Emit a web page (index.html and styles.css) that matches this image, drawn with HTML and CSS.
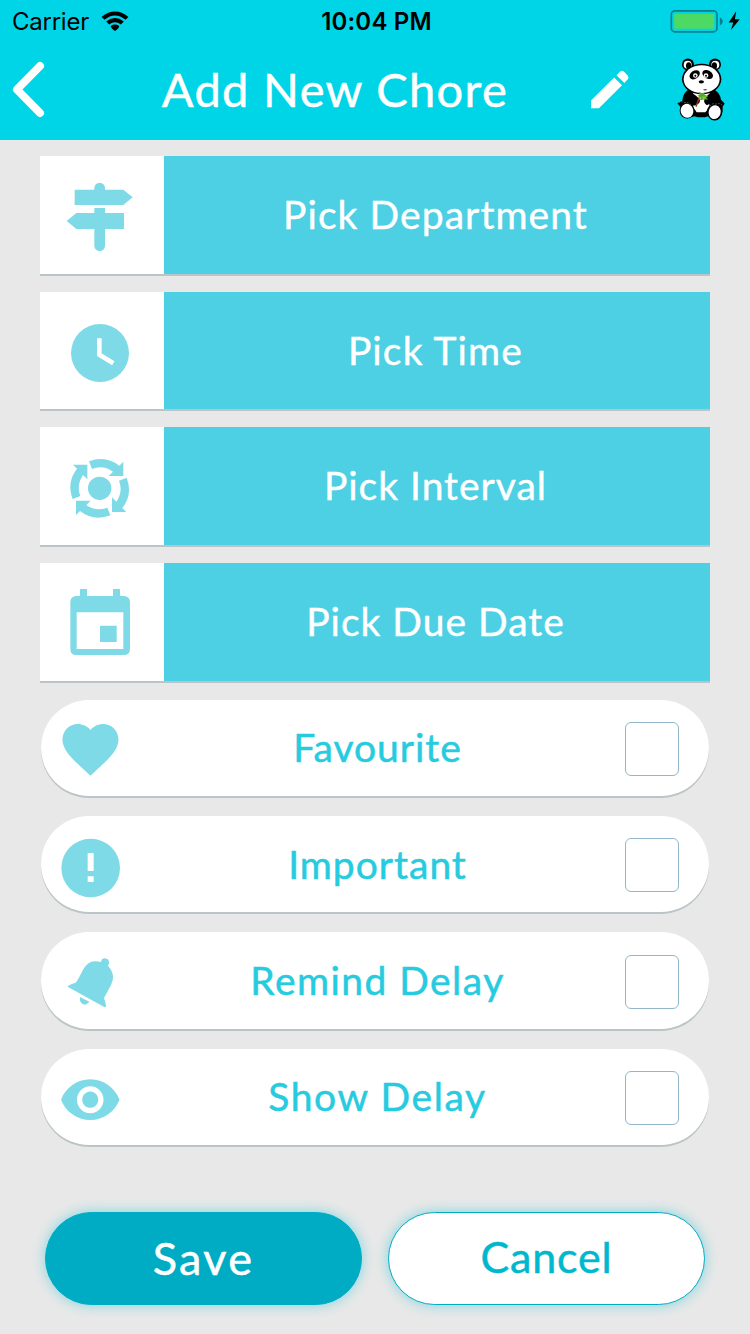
FILE: index.html
```html
<!DOCTYPE html>
<html lang="en">
<head>
<meta charset="utf-8">
<title>Add New Chore</title>
<link rel="stylesheet" href="styles.css">
</head>
<body>
<div class="screen">
  <header class="header">
    <div class="status">
      <div class="status-left">
        <span class="carrier">Carrier</span>
        <svg class="wifi" viewBox="303 29 84 61"><path d="M304 47Q345 14 386 47L377 56Q345 30 313 56ZM318 61Q345 40 372 61L363 70Q345 56 327 70ZM332 75Q345 66 358 75Q357 82 345 90Q333 82 332 75Z"/></svg>
      </div>
      <span class="clock">10:04 PM</span>
      <svg class="battery" viewBox="330 27 213 70">
        <rect x="332.500" y="29.500" width="139" height="64" rx="11" fill="none" stroke="#087f8c" stroke-width="5"/>
        <rect x="341" y="39" width="122" height="45" rx="4" fill="#4cd964"/>
        <path d="M480 49Q489 54 489 61.500Q489 69 480 74Z" fill="#087f8c"/>
        <path d="M530 31L507 65H521L514 88L541 55H526Z"/>
      </svg>
    </div>
    <div class="nav">
      <svg class="back" viewBox="36 183 100 172"><path d="M121 198L51 269L121 340" fill="none" stroke="#fff" stroke-width="24" stroke-linecap="round" stroke-linejoin="round"/></svg>
      <h1 class="title">Add New Chore</h1>
      <svg class="edit" viewBox="93 212 115 116"><path d="M93 327V303L163 234L187 257L117 327ZM170 227L182 215Q187 211 192 215L205 229Q208 234 205 238L194 250Z" fill="#fff"/></svg>
      <svg class="panda" viewBox="349 176 144 188">
        <circle cx="382" cy="195" r="18"/><circle cx="463" cy="195" r="18"/>
        <circle cx="381" cy="196" r="12" fill="#fff"/><circle cx="464" cy="196" r="12" fill="#fff"/>
        <ellipse cx="384" cy="199" rx="8" ry="11"/><ellipse cx="461" cy="199" rx="8" ry="11"/>
        <path d="M380 272Q366 285 365 304L350 311L359 322Q353 352 380 357L401 350Q422 357 443 350L463 362Q489 353 486 322L492 312L481 301Q479 282 461 270Z"/>
        <path d="M396 276Q422 286 448 276Q446 290 442 303L448 322L434 338H408L397 322L403 308Z" fill="#fff"/>
        <path d="M380 278Q397 278 415 297Q421 305 414 312L402 319L389 306ZM459 278Q443 281 432 297Q427 311 439 317L457 307Z"/>
        <ellipse cx="423" cy="239" rx="59" ry="46"/>
        <ellipse cx="423" cy="239" rx="54" ry="42" fill="#fff"/>
        <ellipse cx="402" cy="226" rx="17" ry="12" transform="rotate(-35 402 226)"/>
        <ellipse cx="441" cy="225" rx="17" ry="12" transform="rotate(28 441 225)"/>
        <circle cx="404" cy="228" r="7" fill="#fff"/><circle cx="436" cy="228" r="7" fill="#fff"/>
        <circle cx="404" cy="229" r="3"/><circle cx="436" cy="229" r="3"/>
        <ellipse cx="422" cy="247" rx="8" ry="5"/>
        <path d="M427 271Q433 267 440 271Q433 274 427 271Z"/>
        <path d="M416 293L406 322" stroke="#963d18" stroke-width="4"/>
        <path d="M410 289L417 286L414 277L425 281L432 278L431 286L443 290L436 293L443 300L429 300L418 302L420 295Z" fill="#55a92b"/>
        <path d="M422 292L440 291L429 299Z" fill="#8cc93d"/>
        <ellipse cx="379" cy="333" rx="22" ry="24"/><ellipse cx="462" cy="337" rx="23" ry="26"/>
        <ellipse cx="379" cy="334" rx="19" ry="21" fill="#fff" transform="rotate(-15 379 334)"/>
        <ellipse cx="462" cy="338" rx="18" ry="21" fill="#fff" transform="rotate(15 462 338)"/>
        <path d="M354 311Q361 302 370 310Q386 305 391 318M448 320Q455 309 466 314Q479 308 489 322" fill="none" stroke="#aaa" stroke-width="1.500" stroke-dasharray="5 4"/>
      </svg>
    </div>
  </header>

  <main class="form">
    <section class="pickers">
      <div class="picker">
        <svg class="picker-icon" viewBox="30 33 372 353"><path d="M193 134V129A16 16 0 0 1 225 129V134H280L308 157L280 180H134V134ZM193 204V189H225V204H282V252H225V302A16 16 0 0 1 193 302V252H139L110 228L139 204Z"/></svg>
        <span class="picker-label department">Pick Department</span>
      </div>
      <div class="picker">
        <svg class="picker-icon" viewBox="30 21 372 353"><circle cx="210" cy="204" r="87"/><path d="M208 160V209L250 235" fill="none" stroke="#fff" stroke-width="14"/></svg>
        <span class="picker-label time">Pick Time</span>
      </div>
      <div class="picker">
        <svg class="picker-icon" viewBox="30 21 372 353">
          <defs><path id="turn" d="M177 124Q227 105 268 137L280 125V168H236L249 155Q219 134 186 147Z"/></defs>
          <circle cx="209" cy="205" r="35"/>
          <use href="#turn"/><use href="#turn" transform="rotate(90 209 205)"/><use href="#turn" transform="rotate(180 209 205)"/><use href="#turn" transform="rotate(270 209 205)"/>
        </svg>
        <span class="picker-label interval">Pick Interval</span>
      </div>
      <div class="picker">
        <svg class="picker-icon" viewBox="30 24 372 353"><path fill-rule="evenodd" d="M150 123V102H171V123H249V102H270V123H281Q300 124 300 142V281Q300 300 281 300H139Q121 300 121 281V142Q121 124 139 123ZM140 172V282H280V172ZM210 212H260V261H210Z"/></svg>
        <span class="picker-label date">Pick Due Date</span>
      </div>
    </section>

    <section class="options">
      <label class="option">
        <svg class="option-icon" viewBox="33 29 300 291"><path transform="translate(80.600 78.700) scale(8.400 8.440)" d="M12 21.350l-1.450-1.320C5.400 15.360 2 12.280 2 8.500 2 5.420 4.420 3 7.500 3c1.740 0 3.410.81 4.500 2.090C13.090 3.810 14.760 3 16.500 3 19.580 3 22 5.420 22 8.500c0 3.780-3.400 6.860-8.550 11.540L12 21.350z"/></svg>
        <span class="option-label favourite">Favourite</span>
        <input class="check" type="checkbox">
      </label>
      <label class="option">
        <svg class="option-icon" viewBox="33 378 300 291"><path fill-rule="evenodd" d="M94 534A88 88 0 0 1 270 534A88 88 0 0 1 94 534ZM173 489V543H191V489ZM173 559V576H191V559Z"/></svg>
        <span class="option-label important">Important</span>
        <input class="check" type="checkbox">
      </label>
      <label class="option">
        <svg class="option-icon" viewBox="33 38 300 291"><path d="M114 203V200Q116 197 137 190Q142 186 152 165Q164 138 178 130Q192 123 213 128Q214 117 225 117Q237 118 237 130Q237 135 234 139Q259 165 243 197L222 236Q228 252 228 262L224 264ZM150 233L178 247Q171 256 163 256Q147 251 150 233Z"/></svg>
        <span class="option-label remind">Remind Delay</span>
        <input class="check" type="checkbox">
      </label>
      <label class="option">
        <svg class="option-icon" viewBox="33 387 300 291"><path transform="translate(85 441.500) scale(7.980 8.130)" d="M12 4.500C7 4.500 2.730 7.610 1 12c1.730 4.390 6 7.500 11 7.500s9.270-3.110 11-7.500c-1.730-4.390-6-7.500-11-7.500zM12 17c-2.760 0-5-2.240-5-5s2.240-5 5-5 5 2.240 5 5-2.240 5-5 5zm0-8c-1.660 0-3 1.340-3 3s1.340 3 3 3 3-1.340 3-3-1.340-3-3-3z"/></svg>
        <span class="option-label show">Show Delay</span>
        <input class="check" type="checkbox">
      </label>
    </section>

    <div class="actions">
      <button class="button save">Save</button>
      <button class="button cancel">Cancel</button>
    </div>
  </main>
</div>
</body>
</html>
```
FILE: styles.css
```css
* { box-sizing: border-box; }

body {
  margin: 0;
  background: #e8e8e8;
  font-family: Lato, "Open Sans", sans-serif;
}

svg { display: block; }

.screen {
  width: 750px;
  height: 1334px;
  overflow: hidden;
}

/* Header */
.header {
  height: 140px;
  background: #00d5e7;
}

.status {
  display: grid;
  grid-template-columns: 1fr auto 1fr;
  align-items: center;
  height: 40px;
  padding: 0 9px 0 12px;
  font: 500 24px/40px Inter, sans-serif;
  color: #000;
}

.status-left {
  display: flex;
  align-items: center;
  gap: 12px;
}

.carrier {
  padding-top: 2px;
  font-weight: 400;
  letter-spacing: -0.250px;
}

.wifi { width: 28px; height: 20px; }

.clock {
  padding-top: 2px;
  font-weight: 600;
  letter-spacing: 0.200px;
}

.battery { width: 71px; height: 23px; justify-self: end; }

.nav {
  display: grid;
  grid-template-columns: 34px 1fr 38px 96px;
  align-items: center;
  height: 100px;
  padding: 0 25px 2px 12px;
}

.back { width: 33px; height: 57px; }

.title {
  margin: 0;
  padding-left: 33px;
  text-align: center;
  font-size: 47px;
  font-weight: 400;
  line-height: 60px;
  letter-spacing: 1.350px;
  color: #fff;
  -webkit-text-stroke: 0.500px #fff;
}

.edit { width: 38px; height: 39px; }
.panda { width: 48px; height: 63px; justify-self: end; }

/* Pickers */
.form { padding: 16px 40px 0; }

.pickers {
  display: flex;
  flex-direction: column;
  gap: 18px;
}

.picker {
  display: flex;
  height: 117.670px;
  background: #fff;
  box-shadow: 0 2px 0 #bbc4c6;
}

.picker-icon {
  width: 124px;
  height: 117.670px;
  fill: #7edae6;
}

.picker-label {
  flex: 1;
  padding-right: 3px;
  background: #4dd0e3;
  color: #fff;
  font-size: 39px;
  line-height: 117px;
  letter-spacing: 1px;
  text-align: center;
  -webkit-text-stroke: 0.400px #fff;
}

.department { letter-spacing: 1.080px; }
.time { letter-spacing: 1.150px; }

/* Options */
.options {
  display: flex;
  flex-direction: column;
  gap: 20px;
  margin-top: 19px;
  padding: 0 1px;
}

.option {
  display: flex;
  align-items: center;
  height: 96.400px;
  padding-right: 30px;
  border-radius: 48px;
  background: #fff;
  box-shadow: 0 2px 0 #bbc4c6;
}

.option-icon {
  width: 100px;
  height: 97px;
  fill: #7edae6;
}

.option-label {
  flex: 1;
  margin-right: 11px;
  text-align: center;
  font-size: 39px;
  line-height: 94px;
  padding-bottom: 1px;
  letter-spacing: 1px;
  color: #26cbe0;
  -webkit-text-stroke: 0.500px #26cbe0;
}

.remind { letter-spacing: 1.450px; }
.show { letter-spacing: 1.600px; }

.check {
  appearance: none;
  width: 54px;
  height: 54px;
  margin: 2px 0 0;
  border: 1px solid #92b7ca;
  border-radius: 6px;
}

/* Actions */
.actions {
  display: flex;
  gap: 26px;
  margin-top: 67px;
  padding: 0 5px;
}

.button {
  flex: 1;
  height: 93px;
  padding: 0 0 3px;
  border: 1px solid #00acc4;
  border-radius: 47px;
  font: 400 43px/88px Lato, "Open Sans", sans-serif;
  box-shadow: 0 0 13px rgba(0, 190, 212, 0.45);
}

.save {
  padding-bottom: 1px;
  background: #00acc4;
  color: #fff;
  font-size: 45px;
  letter-spacing: 2.300px;
  -webkit-text-stroke: 0.500px #fff;
}

.cancel {
  padding-bottom: 4px;
  background: #fff;
  color: #00b8ce;
  letter-spacing: 0.800px;
  -webkit-text-stroke: 0.500px #00b8ce;
}
```
